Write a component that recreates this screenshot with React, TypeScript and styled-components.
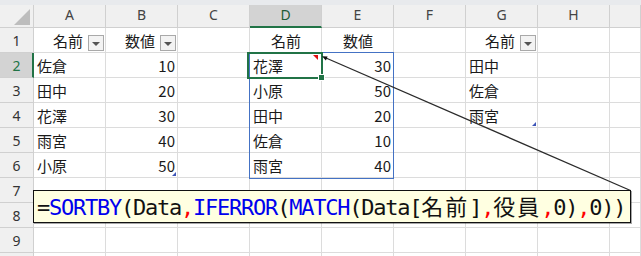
import React from 'react';
import styled, { createGlobalStyle } from 'styled-components';

type Align = 'left' | 'right' | 'center';

type CellDef = {
  text?: string;
  align?: Align;
  filter?: boolean;
  note?: boolean;
  tableEnd?: boolean;
};

const COLUMNS = ['A', 'B', 'C', 'D', 'E', 'F', 'G', 'H', ''];
const SELECTED_COL = 'D';
const SELECTED_ROW = 2;
// rows past this one are only a sliver at the bottom edge, label hidden
const VISIBLE_ROWS = 9;

const L = (text: string, extra: Partial<CellDef> = {}): CellDef => ({
  text,
  align: 'left',
  ...extra,
});
const R = (text: string, extra: Partial<CellDef> = {}): CellDef => ({
  text,
  align: 'right',
  ...extra,
});
const C = (text: string): CellDef => ({ text, align: 'center' });
const E: CellDef = {};

const fill = (cells: CellDef[]) =>
  COLUMNS.map((_, i) => cells[i] ?? E);

const ROWS: CellDef[][] = [
  fill([
    R('名前', { filter: true }),
    R('数値', { filter: true }),
    E,
    C('名前'),
    C('数値'),
    E,
    R('名前', { filter: true }),
  ]),
  fill([L('佐倉'), R('10'), E, L('花澤', { note: true }), R('30'), E, L('田中')]),
  fill([L('田中'), R('20'), E, L('小原'), R('50'), E, L('佐倉')]),
  fill([L('花澤'), R('30'), E, L('田中'), R('20'), E, L('雨宮', { tableEnd: true })]),
  fill([L('雨宮'), R('40'), E, L('佐倉'), R('10')]),
  fill([L('小原'), R('50', { tableEnd: true }), E, L('雨宮'), R('40')]),
  fill([]),
  fill([]),
  fill([]),
  fill([]),
];

const GlobalStyle = createGlobalStyle`
  html, body {
    margin: 0;
    padding: 0;
    background: #ffffff;
  }
`;

export default function App() {
  return (
    <>
      <GlobalStyle />
      <Sheet>
        <TopBand />
        <Grid>
          <Corner>
            <CornerTriangle />
          </Corner>
          {COLUMNS.map((col, i) => (
            <ColHeader key={`h${i}`} $selected={col === SELECTED_COL}>
              {col}
            </ColHeader>
          ))}
          {ROWS.map((cells, r) => (
            <React.Fragment key={`r${r}`}>
              <RowHeader $selected={r + 1 === SELECTED_ROW}>
                {r < VISIBLE_ROWS ? r + 1 : ''}
              </RowHeader>
              {cells.map((cell, c) => (
                <Cell key={`c${r}_${c}`} $align={cell.align ?? 'left'}>
                  {cell.text && <CellText>{cell.text}</CellText>}
                  {cell.filter && (
                    <FilterButton>
                      <FilterArrow />
                    </FilterButton>
                  )}
                  {cell.note && <NoteMark />}
                  {cell.tableEnd && <TableEnd />}
                </Cell>
              ))}
            </React.Fragment>
          ))}
        </Grid>

        <SpillRange />
        <Selection>
          <FillHandle />
        </Selection>

        <Connector width="641" height="256" viewBox="0 0 641 256">
          <line x1="630.5" y1="190.5" x2="326" y2="58" stroke="#2b2b2b" strokeWidth="1.3" />
          <polygon points="322,56.2 327.6,56.6 325.9,60.5" fill="#111" />
        </Connector>

        <Comment>
          <Formula>
            =<Fn>SORTBY</Fn>(Data<Sep>,</Sep>
            <Fn>IFERROR</Fn>(<Fn>MATCH</Fn>(Data[<Wide>名前</Wide>]<Sep>,</Sep>
            <Wide>役員</Wide>
            <Sep>,</Sep>0)<Sep>,</Sep>0))
          </Formula>
        </Comment>
      </Sheet>
    </>
  );
}

const Sheet = styled.div`
  position: relative;
  width: 641px;
  height: 256px;
  overflow: hidden;
  background: #ffffff;
`;

const TopBand = styled.div`
  height: 5px;
  background: #e8eaed;
`;

const Grid = styled.div`
  display: grid;
  grid-template-columns: 34px repeat(8, 72px) 1fr;
  grid-template-rows: 23px;
  grid-auto-rows: 25px;
`;

const HeaderBase = styled.div`
  box-sizing: border-box;
  display: flex;
  align-items: center;
  justify-content: center;
  background: #f0f0f0;
  border-right: 1px solid #d0d0d0;
  border-bottom: 1px solid #d0d0d0;
  font-family: 'Noto Sans', 'Liberation Sans', sans-serif;
  font-size: 14px;
  color: #444444;
`;

const Corner = styled(HeaderBase)`
  position: relative;
`;

const CornerTriangle = styled.div`
  position: absolute;
  right: 3px;
  bottom: 2px;
  width: 0;
  height: 0;
  border-style: solid;
  border-width: 0 0 16px 16px;
  border-color: transparent transparent #bdbdbd transparent;
`;

const ColHeader = styled(HeaderBase)<{ $selected?: boolean }>`
  padding-bottom: 3px;
  background: ${({ $selected }) => ($selected ? '#d3d3d3' : '#f0f0f0')};
  color: ${({ $selected }) => ($selected ? '#1d5b35' : '#444444')};
  border-bottom: ${({ $selected }) =>
    $selected ? '2px solid #217346' : '1px solid #d0d0d0'};
`;

const RowHeader = styled(HeaderBase)<{ $selected?: boolean }>`
  background: ${({ $selected }) => ($selected ? '#d3d3d3' : '#f0f0f0')};
  color: ${({ $selected }) => ($selected ? '#217346' : '#333333')};
  border-right: ${({ $selected }) =>
    $selected ? '2px solid #217346' : '1px solid #d0d0d0'};
  padding-left: ${({ $selected }) => ($selected ? '1px' : '0')};
`;

const justify: Record<Align, string> = {
  left: 'flex-start',
  right: 'flex-end',
  center: 'center',
};

const Cell = styled.div<{ $align: Align }>`
  position: relative;
  box-sizing: border-box;
  display: flex;
  align-items: center;
  justify-content: ${({ $align }) => justify[$align]};
  padding: 0 2px 0 3px;
  border-right: 1px solid #dcdcdc;
  border-bottom: 1px solid #dcdcdc;
  font-family: 'Noto Sans CJK JP', 'Noto Sans', sans-serif;
  font-size: 15px;
  color: #1a1a1a;
  white-space: nowrap;
`;

const CellText = styled.span`
  line-height: 1;
`;

const FilterButton = styled.div`
  box-sizing: border-box;
  align-self: flex-end;
  display: flex;
  align-items: center;
  justify-content: center;
  width: 16px;
  height: 16px;
  margin: 0 -1px 1px 5px;
  background: #f3f3f3;
  border: 1px solid #a9a9a9;
`;

const FilterArrow = styled.div`
  width: 0;
  height: 0;
  margin-top: 2px;
  border-style: solid;
  border-width: 4px 4px 0 4px;
  border-color: #555555 transparent transparent transparent;
`;

const NoteMark = styled.div`
  position: absolute;
  top: 2px;
  right: 3px;
  width: 0;
  height: 0;
  border-style: solid;
  border-width: 0 5px 5px 0;
  border-color: transparent #e01010 transparent transparent;
`;

const TableEnd = styled.div`
  position: absolute;
  right: 1px;
  bottom: 1px;
  width: 0;
  height: 0;
  border-style: solid;
  border-width: 0 0 4px 4px;
  border-color: transparent transparent #3d55b8 transparent;
`;

const SpillRange = styled.div`
  position: absolute;
  left: 249px;
  top: 52px;
  width: 145px;
  height: 127px;
  box-sizing: border-box;
  border: 1px solid #4472c4;
  pointer-events: none;
`;

const Selection = styled.div`
  position: absolute;
  left: 247px;
  top: 52px;
  width: 76px;
  height: 27px;
  box-sizing: border-box;
  border: 2px solid #217346;
  pointer-events: none;
`;

const FillHandle = styled.div`
  position: absolute;
  right: -4px;
  bottom: -4px;
  width: 5px;
  height: 5px;
  background: #217346;
  border: 1px solid #ffffff;
`;

const Connector = styled.svg`
  position: absolute;
  left: 0;
  top: 0;
  pointer-events: none;
`;

const Comment = styled.div`
  position: absolute;
  left: 33px;
  top: 190px;
  width: 598px;
  height: 33px;
  box-sizing: border-box;
  display: flex;
  align-items: center;
  padding: 0 3px;
  background: #ffffe1;
  border: 1px solid #111111;
  box-shadow: 1px 1px 0 rgba(0, 0, 0, 0.35);
`;

const Formula = styled.div`
  font-family: 'DejaVu Sans Mono', 'Liberation Mono', 'Noto Sans CJK JP', monospace;
  font-size: 22px;
  letter-spacing: -1.24px;
  line-height: 31px;
  color: #111111;
  white-space: nowrap;
`;

const Fn = styled.span`
  color: #0000ee;
`;

const Sep = styled.span`
  color: #ff0000;
`;

const Wide = styled.span`
  font-family: 'Noto Sans CJK JP', sans-serif;
  font-size: 22px;
  letter-spacing: 2px;
`;
